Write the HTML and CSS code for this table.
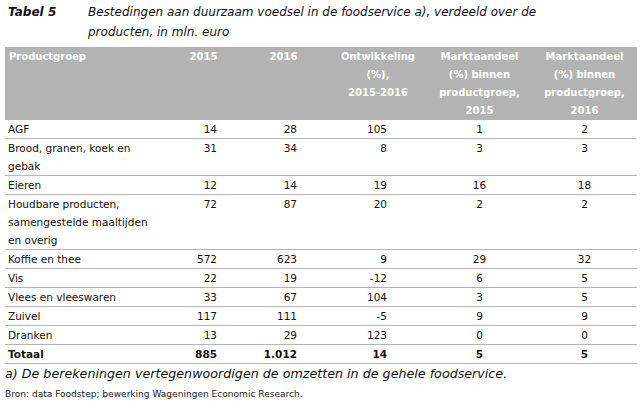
FILE: index.html
```html
<!DOCTYPE html>
<html lang="nl">
<head>
<meta charset="utf-8">
<title>Tabel 5</title>
<link rel="stylesheet" href="styles.css">
</head>
<body>
<div class="page">
  <div class="caption">
    <div class="caption-label">Tabel 5</div>
    <div class="caption-text">Bestedingen aan duurzaam voedsel in de foodservice a), verdeeld over de<br>producten, in mln. euro</div>
  </div>
  <table class="data">
    <colgroup>
      <col class="c1"><col class="c2"><col class="c3"><col class="c4"><col class="c5"><col class="c6">
    </colgroup>
    <thead>
      <tr>
        <th class="left">Productgroep</th>
        <th>2015</th>
        <th>2016</th>
        <th>Ontwikkeling<br>(%),<br>2015-2016</th>
        <th>Marktaandeel<br>(%) binnen<br>productgroep,<br>2015</th>
        <th>Marktaandeel<br>(%) binnen<br>productgroep,<br>2016</th>
      </tr>
    </thead>
    <tbody>
      <tr><td>AGF</td><td class="n2">14</td><td class="n3">28</td><td class="n4">105</td><td class="mid">1</td><td class="mid">2</td></tr>
      <tr><td>Brood, granen, koek en<br>gebak</td><td class="n2">31</td><td class="n3">34</td><td class="n4">8</td><td class="mid">3</td><td class="mid">3</td></tr>
      <tr><td>Eieren</td><td class="n2">12</td><td class="n3">14</td><td class="n4">19</td><td class="mid">16</td><td class="mid">18</td></tr>
      <tr><td>Houdbare producten,<br>samengestelde maaltijden<br>en overig</td><td class="n2">72</td><td class="n3">87</td><td class="n4">20</td><td class="mid">2</td><td class="mid">2</td></tr>
      <tr><td>Koffie en thee</td><td class="n2">572</td><td class="n3">623</td><td class="n4">9</td><td class="mid">29</td><td class="mid">32</td></tr>
      <tr><td>Vis</td><td class="n2">22</td><td class="n3">19</td><td class="n4">-12</td><td class="mid">6</td><td class="mid">5</td></tr>
      <tr><td>Vlees en vleeswaren</td><td class="n2">33</td><td class="n3">67</td><td class="n4">104</td><td class="mid">3</td><td class="mid">5</td></tr>
      <tr><td>Zuivel</td><td class="n2">117</td><td class="n3">111</td><td class="n4">-5</td><td class="mid">9</td><td class="mid">9</td></tr>
      <tr><td>Dranken</td><td class="n2">13</td><td class="n3">29</td><td class="n4">123</td><td class="mid">0</td><td class="mid">0</td></tr>
      <tr class="total"><td>Totaal</td><td class="n2">885</td><td class="n3">1.012</td><td class="n4">14</td><td class="mid">5</td><td class="mid">5</td></tr>
    </tbody>
  </table>
  <p class="footnote">a) De berekeningen vertegenwoordigen de omzetten in de gehele foodservice.</p>
  <p class="source">Bron: data Foodstep; bewerking Wageningen Economic Research.</p>
</div>
</body>
</html>
```

FILE: styles.css
```css
html, body {
  margin: 0;
  padding: 0;
  background: #ffffff;
}

body {
  font-family: "DejaVu Sans", Verdana, sans-serif;
  color: #111111;
}

.page {
  padding: 2px 3px 0 5px;
}

.caption {
  display: flex;
  font-size: 12px;
  line-height: 20px;
  color: #111;
  font-style: italic;
}

.caption-label {
  width: 80px;
  padding-left: 3px;
  font-weight: bold;
  flex: none;
}

.caption-text {
  flex: 1;
}

.data {
  margin-top: 5px;
  width: 632px;
  border-collapse: collapse;
  table-layout: fixed;
  font-size: 10.5px;
  line-height: 18px;
}

.c1 { width: 164px; }
.c2 { width: 69px; }
.c3 { width: 91px; }
.c4 { width: 98px; }
.c5 { width: 105px; }
.c6 { width: 105px; }

.data thead th {
  background: #b3b3b3;
  color: #ffffff;
  font-weight: bold;
  font-size: 10px;
  text-align: center;
  vertical-align: top;
  padding: 1px 0 0 0;
  white-space: nowrap;
}

.data thead th.left {
  text-align: left;
  padding-left: 4px;
}

.data td {
  padding: 0;
  vertical-align: top;
  border-bottom: 1px solid #b4b4b4;
  white-space: nowrap;
}

.data td:first-child {
  padding-left: 3px;
}

.data td.n2 { text-align: right; padding-right: 21px; }
.data td.n3 { text-align: right; padding-right: 32px; }
.data td.n4 { text-align: right; padding-right: 40px; }
.data td.mid { text-align: center; }

.data tr.total td {
  font-weight: bold;
}

.footnote {
  margin: 0;
  font-size: 12.7px;
  line-height: 20px;
  font-style: italic;
  color: #111;
}

.source {
  margin: 2px 0 0 0;
  font-size: 9.05px;
  line-height: 16px;
  color: #222;
}
```
